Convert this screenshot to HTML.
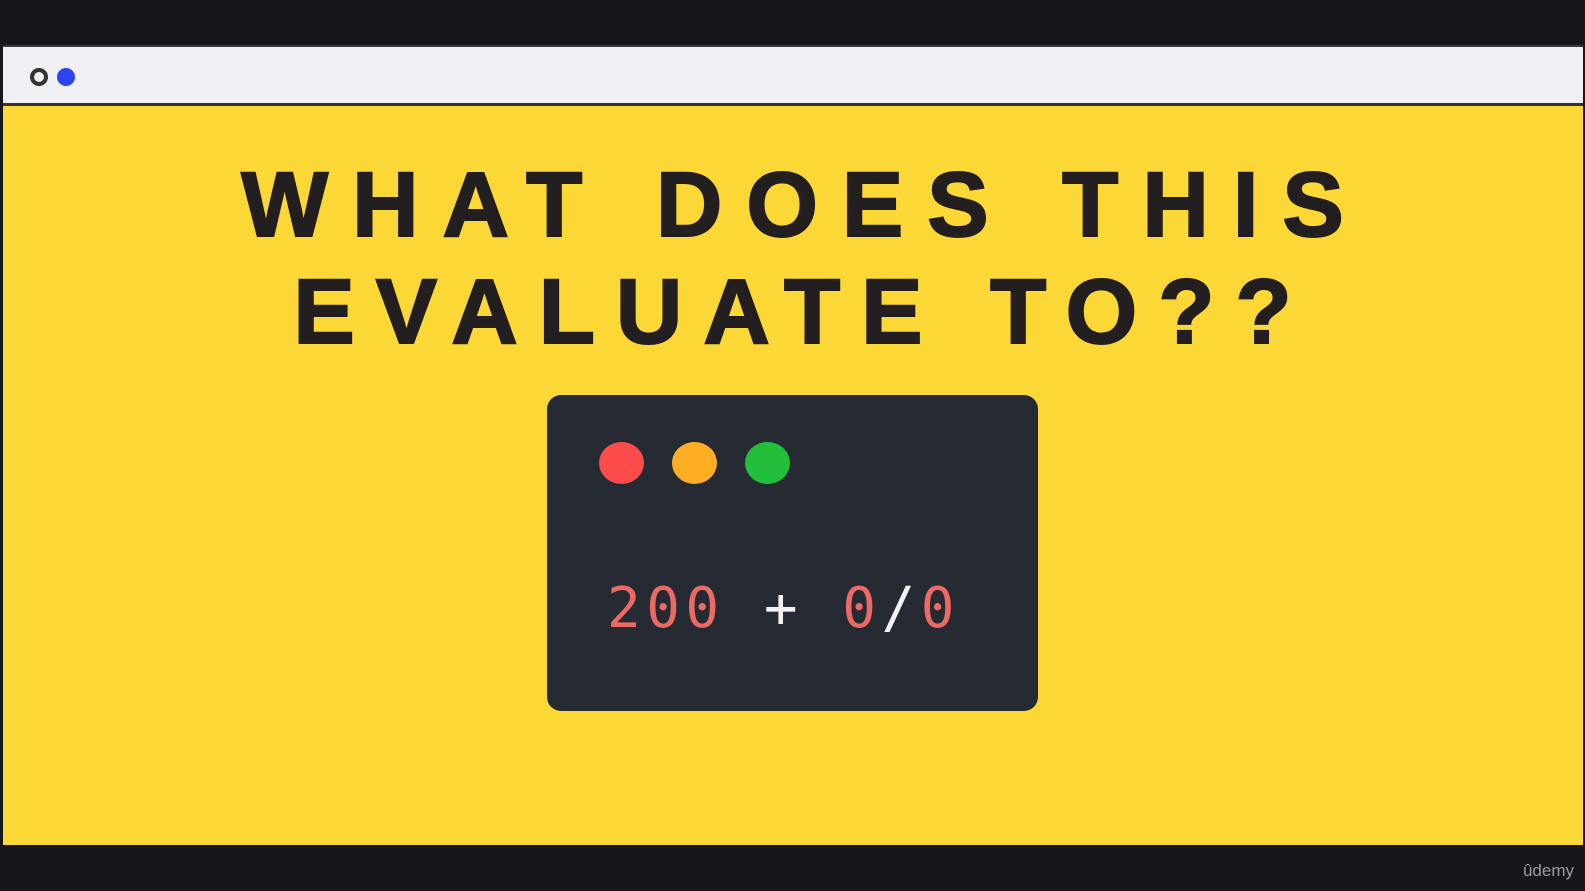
<!DOCTYPE html>
<html><head><meta charset="utf-8"><style>
html,body{margin:0;padding:0;}
body{width:1585px;height:891px;background:#15171c;position:relative;overflow:hidden;font-family:"Liberation Sans",sans-serif;}
.frame{position:absolute;left:3px;top:45px;width:1580px;height:800px;background:#fcd837;}
.bar{position:absolute;left:0;top:0;width:1580px;height:61px;background:#efeff4;border-top:2px solid #3a3a40;border-bottom:3px solid #333338;box-sizing:border-box;}
.d1{position:absolute;left:27px;top:21px;width:10px;height:10px;border:4px solid #333;border-radius:50%;background:#efeff4;}
.d2{position:absolute;left:54px;top:21px;width:18px;height:18px;border-radius:50%;background:#2e43f0;}
.t{position:absolute;left:0;width:1585px;text-align:center;font-weight:bold;font-size:92px;letter-spacing:24px;padding-left:24px;box-sizing:border-box;color:#231f20;line-height:92px;-webkit-text-stroke:2px #231f20;}
.box{position:absolute;left:547px;top:395px;width:491px;height:316px;background:#252a33;border-radius:14px;}
.c{position:absolute;top:47px;width:45px;height:42px;border-radius:50%;}
.code{position:absolute;left:60px;top:179px;font-family:"DejaVu Sans Mono","Liberation Mono",monospace;font-size:56px;letter-spacing:5.5px;color:#ec6a63;line-height:70px;white-space:pre;}
.code b{color:#f2f2f2;font-weight:normal;}
.ud{position:absolute;right:11px;top:861px;color:#9a9ca2;font-size:17px;}
</style></head><body>
<div class="frame">
 <div class="bar"><div class="d1"></div><div class="d2"></div></div>
</div>
<div class="t" style="top:159px">WHAT DOES THIS</div>
<div class="t" style="top:266px;letter-spacing:21px;padding-left:21px">EVALUATE TO??</div>
<div class="box">
 <div class="c" style="left:52px;background:#fc4d4c"></div>
 <div class="c" style="left:125px;background:#fdae24"></div>
 <div class="c" style="left:198px;background:#22c03a"></div>
 <div class="code">200 <b>+</b> 0<b>/</b>0</div>
</div>
<div class="ud">ûdemy</div>
</body></html>
